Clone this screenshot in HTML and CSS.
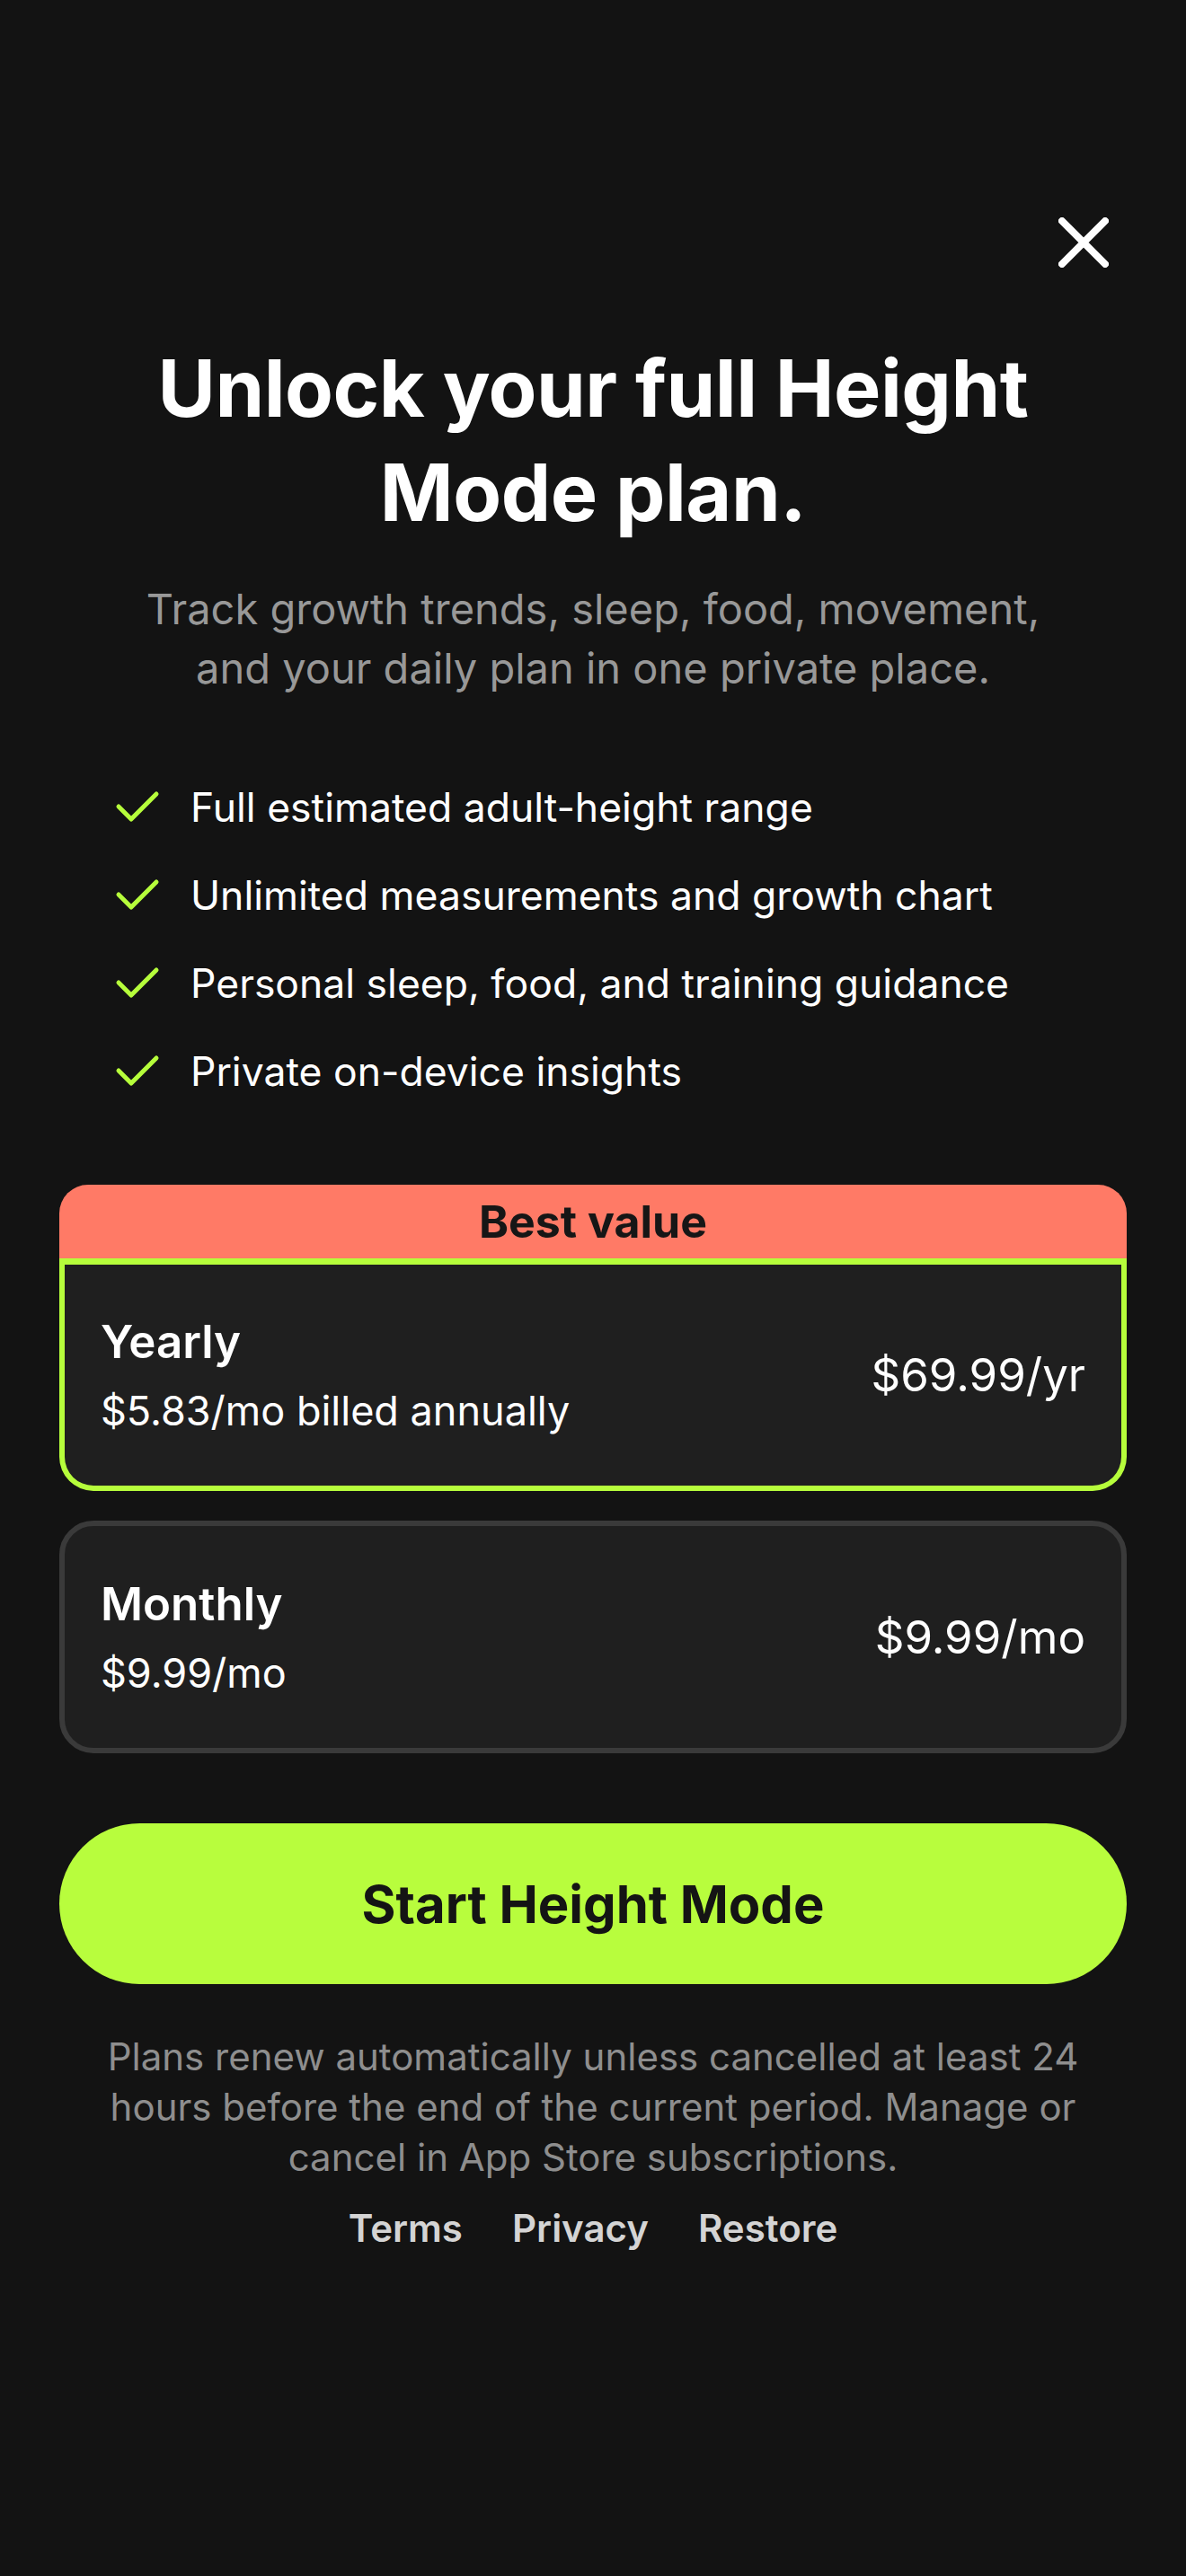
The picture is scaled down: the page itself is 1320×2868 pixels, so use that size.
FILE: index.html
```html
<!DOCTYPE html>
<html lang="en">
<head>
  <meta charset="UTF-8">
  <meta name="viewport" content="width=device-width, initial-scale=1.0">
  <title>Height Mode</title>
  <link rel="stylesheet" href="styles.css">
</head>
<body>
  <div class="paywall">
    <div class="topbar">
      <button class="close" aria-label="Close">
        <svg width="56" height="56" viewBox="0 0 56 56">
          <path d="M4 4 L52 52 M52 4 L4 52" stroke="#fff" stroke-width="8" stroke-linecap="round" fill="none"/>
        </svg>
      </button>
    </div>

    <h1 class="title">Unlock your full Height Mode plan.</h1>
    <p class="subtitle">Track growth trends, sleep, food, movement, and your daily plan in one private place.</p>

    <ul class="features">
      <li><svg class="check" width="50" height="40" viewBox="0 0 50 40"><path d="M4 19 L18 33 L46 5" /></svg>Full estimated adult-height range</li>
      <li><svg class="check" width="50" height="40" viewBox="0 0 50 40"><path d="M4 19 L18 33 L46 5" /></svg>Unlimited measurements and growth chart</li>
      <li><svg class="check" width="50" height="40" viewBox="0 0 50 40"><path d="M4 19 L18 33 L46 5" /></svg>Personal sleep, food, and training guidance</li>
      <li><svg class="check" width="50" height="40" viewBox="0 0 50 40"><path d="M4 19 L18 33 L46 5" /></svg>Private on-device insights</li>
    </ul>

    <div class="plans">
      <div class="plan-wrap">
        <div class="badge">Best value</div>
        <div class="plan plan-selected">
          <div class="plan-info">
            <div class="plan-name">Yearly</div>
            <div class="plan-note">$5.83/mo billed annually</div>
          </div>
          <div class="plan-price">$69.99/yr</div>
        </div>
      </div>
      <div class="plan">
        <div class="plan-info">
          <div class="plan-name">Monthly</div>
          <div class="plan-note">$9.99/mo</div>
        </div>
        <div class="plan-price">$9.99/mo</div>
      </div>
    </div>

    <button class="cta">Start Height Mode</button>

    <p class="fineprint">Plans renew automatically unless cancelled at least 24 hours before the end of the current period. Manage or cancel in App Store subscriptions.</p>

    <div class="links">
      <a href="#">Terms</a>
      <a href="#">Privacy</a>
      <a href="#">Restore</a>
    </div>
  </div>
</body>
</html>
```

FILE: styles.css
```css
body {
  margin: 0;
  background: #131313;
  color: #fff;
  font-family: 'Inter', 'Noto Sans', sans-serif;
}

.paywall {
  padding: 222px 66px 0;
}

.topbar {
  display: flex;
  justify-content: flex-end;
}

.close {
  width: 97px;
  height: 96px;
  padding: 0;
  border: 0;
  background: none;
  display: flex;
  align-items: center;
  justify-content: center;
}

.title {
  margin: 56px 0 0;
  text-align: center;
  font-size: 88px;
  line-height: 116px;
  font-weight: 700;
  letter-spacing: -0.5px;
  padding: 0 40px;
}

.subtitle {
  margin: 39px 0 0;
  text-align: center;
  color: #989898;
  font-size: 47px;
  line-height: 66px;
  padding: 0 70px;
}

.features {
  list-style: none;
  margin: 95px 0 0;
  padding: 0 0 0 62px;
  display: flex;
  flex-direction: column;
  gap: 44px;
}

.features li {
  display: flex;
  align-items: center;
  gap: 34px;
  font-size: 44.5px;
  line-height: 54px;
}

.check path {
  fill: none;
  stroke: #b6fd3b;
  stroke-width: 5;
  stroke-linecap: round;
  stroke-linejoin: round;
}

.plans {
  margin-top: 99px;
  display: flex;
  flex-direction: column;
  gap: 33px;
}

.badge {
  background: #ff7a66;
  color: #161616;
  text-align: center;
  font-weight: 700;
  font-size: 50px;
  height: 82px;
  line-height: 82px;
  border-radius: 32px 32px 0 0;
}

.plan {
  box-sizing: border-box;
  height: 259px;
  padding: 0 40px;
  background: #1f1f1f;
  border: 6px solid #3a3a3a;
  border-radius: 38px;
  display: flex;
  align-items: center;
  justify-content: space-between;
}

.plan-selected {
  border-color: #b6fd3b;
  border-radius: 0 0 38px 38px;
  border-top-width: 7px;
}

.plan-name {
  font-size: 51px;
  line-height: 60px;
  font-weight: 600;
}

.plan-note {
  margin-top: 20px;
  font-size: 45px;
  line-height: 54px;
}

.plan-price {
  font-size: 51px;
  line-height: 60px;
}

.cta {
  display: block;
  width: 100%;
  height: 179px;
  margin-top: 78px;
  border: 0;
  border-radius: 90px;
  background: #b8fd3d;
  color: #141414;
  font-family: 'Inter', 'Noto Sans', sans-serif;
  font-size: 58px;
  font-weight: 700;
}

.fineprint {
  margin: 53px 0 0;
  text-align: center;
  color: #8e8e8e;
  font-size: 42px;
  line-height: 56px;
  padding: 0 20px;
}

.links {
  margin-top: 23px;
  display: flex;
  justify-content: center;
  gap: 55px;
}

.links a {
  color: #d4d4d4;
  text-decoration: none;
  font-size: 42px;
  line-height: 56px;
  font-weight: 600;
}
```
